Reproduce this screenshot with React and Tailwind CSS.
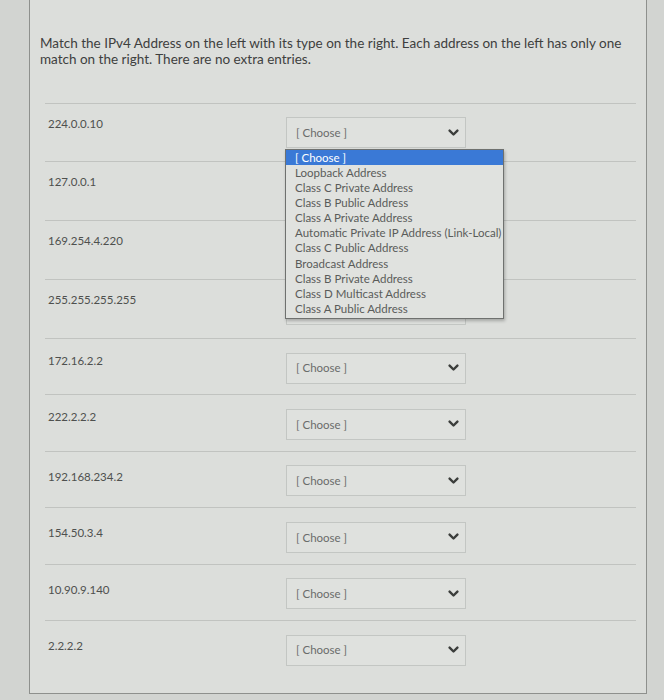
import React from "react";

const rows = [
  "224.0.0.10",
  "127.0.0.1",
  "169.254.4.220",
  "255.255.255.255",
  "172.16.2.2",
  "222.2.2.2",
  "192.168.234.2",
  "154.50.3.4",
  "10.90.9.140",
  "2.2.2.2",
];

const options = [
  "Loopback Address",
  "Class C Private Address",
  "Class B Public Address",
  "Class A Private Address",
  "Automatic Private IP Address (Link-Local)",
  "Class C Public Address",
  "Broadcast Address",
  "Class B Private Address",
  "Class D Multicast Address",
  "Class A Public Address",
];

function Chevron() {
  return (
    <svg width="11" height="8" viewBox="0 0 11 8">
      <path
        d="M1.6 1.6 L5.5 5.5 L9.4 1.6"
        stroke="#3b3d3b"
        strokeWidth="2.4"
        fill="none"
        strokeLinecap="round"
        strokeLinejoin="round"
      />
    </svg>
  );
}

function Select({ open, covered }) {
  return (
    <div className="relative mt-[13.5px] flex h-[31px] w-[180px] items-center justify-between border border-[#c3c6c3] bg-[#dfe1de] pl-[9px] pr-[6px]">
      <span
        className={
          covered
            ? "invisible text-[11.5px] text-[#6a6c6a]"
            : "text-[11.5px] text-[#6a6c6a]"
        }
      >
        [ Choose ]
      </span>
      <Chevron />
      {open && (
        <div className="absolute left-[-2px] top-[31px] z-10 w-max border border-[#6f716f] bg-[#e0e2df] pb-[2px] shadow-[1px_2px_3px_rgba(0,0,0,0.25)]">
          <div className="bg-[#3a79d6] pl-[9px] pr-[2px] text-[11.5px] leading-[15px] text-white">
            [ Choose ]
          </div>
          {options.map((o) => (
            <div
              key={o}
              className="whitespace-nowrap pl-[9px] pr-[2px] text-[11.5px] leading-[15.1px] text-[#5a5c5a]"
            >
              {o}
            </div>
          ))}
        </div>
      )}
    </div>
  );
}

function labelClass(i) {
  if (i < 4) return "pl-[3px] pt-[12px] text-[11.5px] leading-[16px] text-[#4e504e]";
  if (i < 6) return "pl-[3px] pt-[14px] text-[11.5px] leading-[16px] text-[#4e504e]";
  return "pl-[3px] pt-[17px] text-[11.5px] leading-[16px] text-[#4e504e]";
}

export default function App() {
  return (
    <div
      className="h-[700px] w-[664px] overflow-hidden bg-[#d2d4d1] pl-[29px] pr-[17px]"
      style={{ fontFamily: "Lato, 'Open Sans', sans-serif" }}
    >
      <div className="h-[694px] border-x border-b border-[#8e908d] bg-[#dcdedb]">
        <p className="w-[600px] pl-[10px] pt-[35px] text-[13.5px] leading-[16px] text-[#3e403e]">
          Match the IPv4 Address on the left with its type on the right. Each
          address on the left has only one match on the right. There are no
          extra entries.
        </p>
        <div className="ml-[15px] mr-[10px] mt-[35.5px]">
          {rows.map((r, i) => (
            <div
              key={r}
              className={
                i < 4
                  ? "grid h-[58.9px] grid-cols-[241px_180px] border-t border-[#c1c3c0]"
                  : "grid h-[56.4px] grid-cols-[241px_180px] border-t border-[#c1c3c0]"
              }
            >
              <div className={labelClass(i)}>{r}</div>
              <div>
                <Select open={i === 0} covered={i > 0 && i < 4} />
              </div>
            </div>
          ))}
        </div>
      </div>
    </div>
  );
}
